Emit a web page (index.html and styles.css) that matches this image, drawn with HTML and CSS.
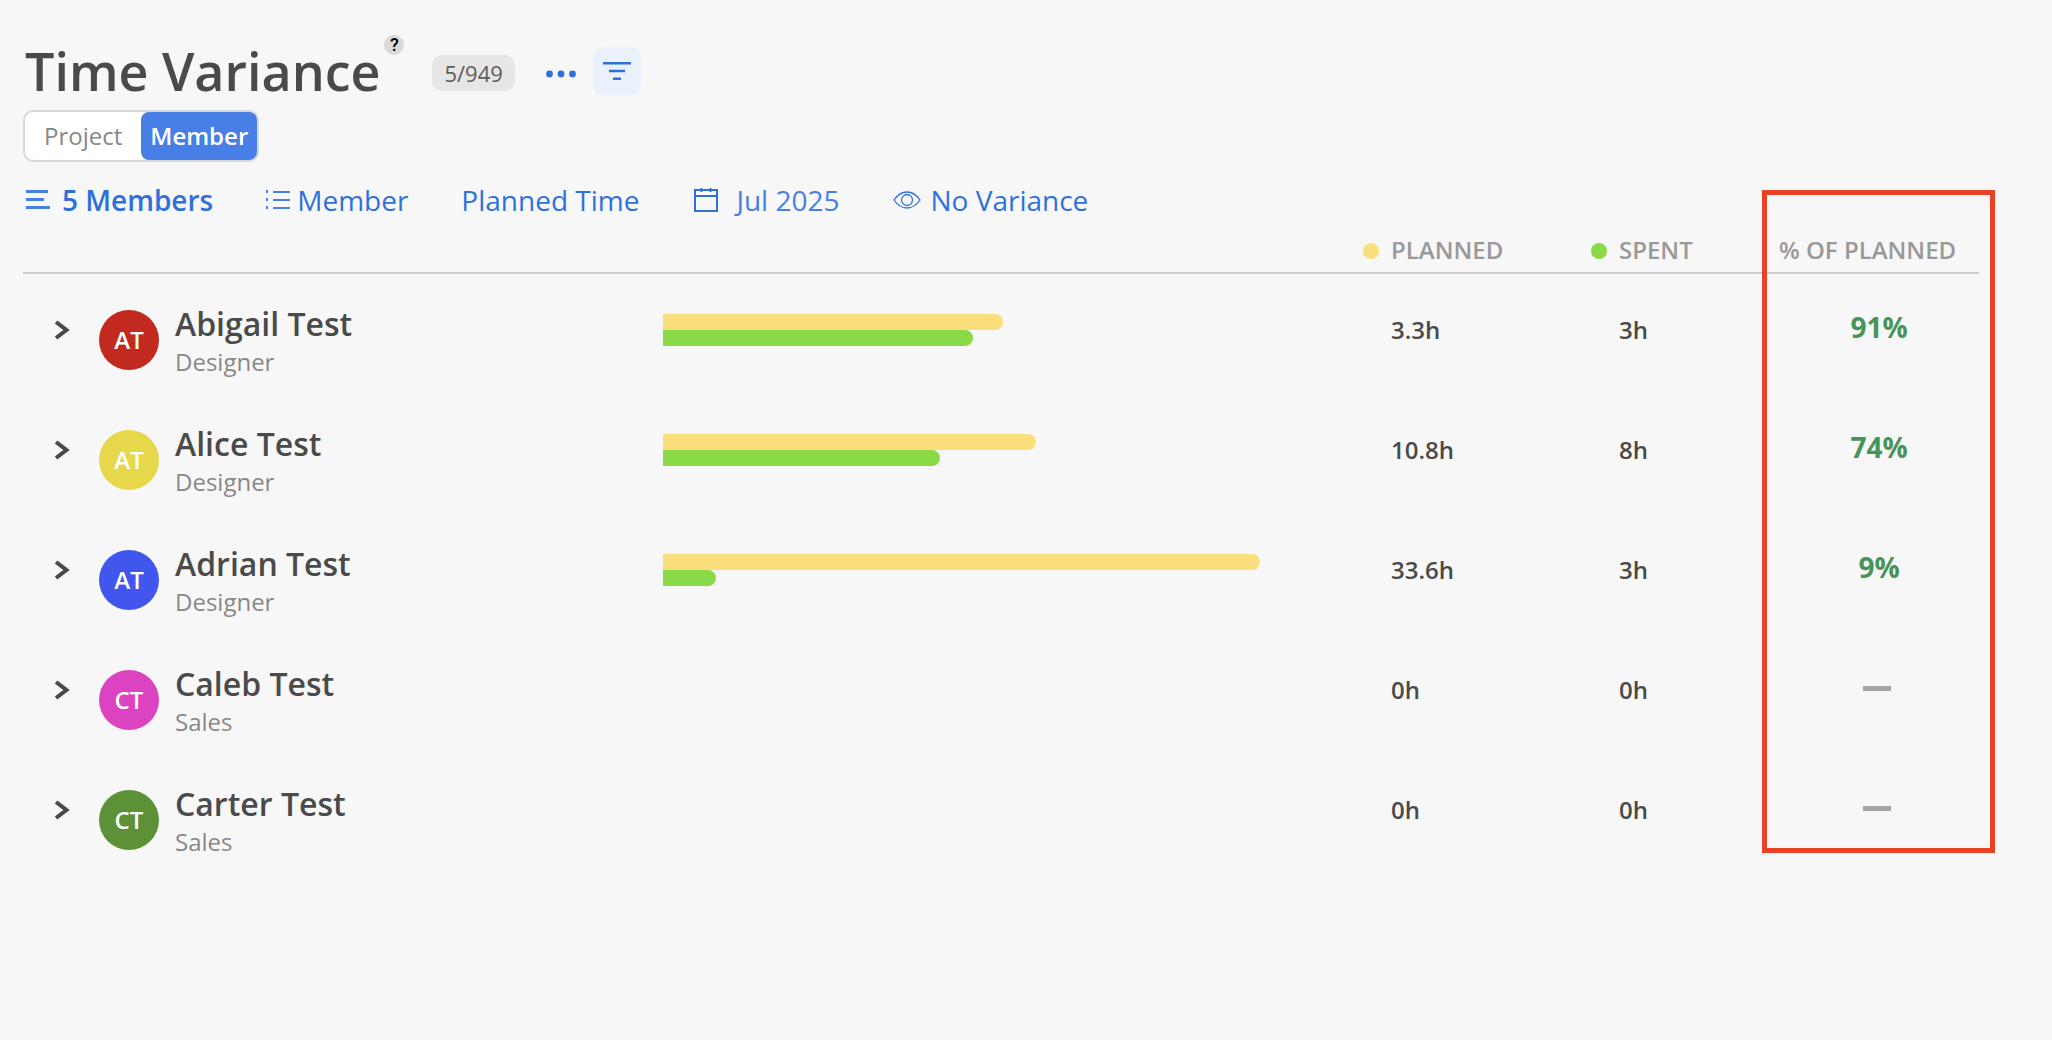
FILE: index.html
```html
<!DOCTYPE html>
<html lang="en">
<head>
<title>Time Variance</title>
<meta charset="utf-8">
<meta name="viewport" content="width=device-width, initial-scale=1.0">
<link rel="stylesheet" href="styles.css">
</head>
<body>

<header class="title-row">
	<h1>Time Variance</h1>
	<button class="help" type="button">?</button>
	<span class="count">5/949</span>
	<button class="more" type="button" aria-label="More">
		<svg width="30" height="8" viewBox="0 0 30 8" fill="#2f71d8"><circle cx="3.500" cy="4" r="3.400"/><circle cx="15" cy="4" r="3.400"/><circle cx="26.500" cy="4" r="3.400"/></svg>
	</button>
	<button class="filter-btn" type="button" aria-label="Filter">
		<svg width="28" height="18" viewBox="0 0 28 18" fill="#2f71d8"><path d="M0 0h28v2.500H0zM6 7.700h16v2.600H6zM10 15.500h8V18h-8z"/></svg>
	</button>
</header>

<div class="toggle">
	<button type="button">Project</button>
	<button type="button" class="active">Member</button>
</div>

<nav class="filters">
	<button type="button" class="bold sort">
		<svg width="24" height="20" viewBox="0 0 24 20" fill="#477fe6"><path d="M0 0h22v3H0zM0 8h18v3H0zM0 16h24v3H0z"/></svg>
		5 Members
	</button>
	<button type="button" class="group">
		<svg width="24" height="20" viewBox="0 0 24 20" fill="#477fe6"><path d="M0 0h2v3H0zM7 1h17v2H7zM0 8h2v3H0zM7 9h17v2H7zM0 16h2v3H0zM7 17h17v2H7z"/></svg>
		Member
	</button>
	<button type="button">Planned Time</button>
	<button type="button" class="date">
		<svg width="26" height="26" viewBox="0 0 26 26" fill="none" stroke="#2f71d8" stroke-width="2"><path d="M3 3h22v21H3zM3 9h22M9.500 1v4M18.500 1v4"/></svg>
		Jul 2025
	</button>
	<button type="button" class="eye">
		<svg width="28" height="20" viewBox="0 0 28 20" fill="none" stroke="#2f71d8" stroke-width="1.300"><path d="M1 10Q6.500 2 14 2T27 10Q21.500 18 14 18T1 10z"/><circle cx="14" cy="10" r="5.500"/></svg>
		No Variance
	</button>
</nav>

<div class="table-wrap">
<table>
	<colgroup>
		<col class="col-member">
		<col class="col-bars">
		<col class="col-planned">
		<col class="col-spent">
		<col class="col-percent">
	</colgroup>
	<thead>
		<tr>
			<td></td>
			<td></td>
			<th scope="col"><span class="dot yellow"></span>PLANNED</th>
			<th scope="col"><span class="dot green"></span>SPENT</th>
			<th scope="col">% OF PLANNED</th>
		</tr>
	</thead>
	<tbody>
		<tr>
			<td>
				<div class="member">
					<button class="expand" type="button" aria-label="Expand"><svg width="16" height="20" viewBox="0 0 16 20" fill="none" stroke="#4a4a4a" stroke-width="4"><path d="M1 2l10.500 8L1 18"/></svg></button>
					<span class="avatar red">AT</span>
					<div><div class="name">Abigail Test</div><div class="role">Designer</div></div>
				</div>
			</td>
			<td class="bars"><div class="bar yellow" style="width:57%"></div><div class="bar green" style="width:52%"></div></td>
			<td class="hours">3.3h</td>
			<td class="hours">3h</td>
			<td class="percent">91%</td>
		</tr>
		<tr>
			<td>
				<div class="member">
					<button class="expand" type="button" aria-label="Expand"><svg width="16" height="20" viewBox="0 0 16 20" fill="none" stroke="#4a4a4a" stroke-width="4"><path d="M1 2l10.500 8L1 18"/></svg></button>
					<span class="avatar gold">AT</span>
					<div><div class="name">Alice Test</div><div class="role">Designer</div></div>
				</div>
			</td>
			<td class="bars"><div class="bar yellow" style="width:62.5%"></div><div class="bar green" style="width:46.4%"></div></td>
			<td class="hours">10.8h</td>
			<td class="hours">8h</td>
			<td class="percent">74%</td>
		</tr>
		<tr>
			<td>
				<div class="member">
					<button class="expand" type="button" aria-label="Expand"><svg width="16" height="20" viewBox="0 0 16 20" fill="none" stroke="#4a4a4a" stroke-width="4"><path d="M1 2l10.500 8L1 18"/></svg></button>
					<span class="avatar blue">AT</span>
					<div><div class="name">Adrian Test</div><div class="role">Designer</div></div>
				</div>
			</td>
			<td class="bars"><div class="bar yellow" style="width:100%"></div><div class="bar green" style="width:8.9%"></div></td>
			<td class="hours">33.6h</td>
			<td class="hours">3h</td>
			<td class="percent">9%</td>
		</tr>
		<tr>
			<td>
				<div class="member">
					<button class="expand" type="button" aria-label="Expand"><svg width="16" height="20" viewBox="0 0 16 20" fill="none" stroke="#4a4a4a" stroke-width="4"><path d="M1 2l10.500 8L1 18"/></svg></button>
					<span class="avatar pink">CT</span>
					<div><div class="name">Caleb Test</div><div class="role">Sales</div></div>
				</div>
			</td>
			<td class="bars"></td>
			<td class="hours">0h</td>
			<td class="hours">0h</td>
			<td class="percent"><span class="none"></span></td>
		</tr>
		<tr>
			<td>
				<div class="member">
					<button class="expand" type="button" aria-label="Expand"><svg width="16" height="20" viewBox="0 0 16 20" fill="none" stroke="#4a4a4a" stroke-width="4"><path d="M1 2l10.500 8L1 18"/></svg></button>
					<span class="avatar olive">CT</span>
					<div><div class="name">Carter Test</div><div class="role">Sales</div></div>
				</div>
			</td>
			<td class="bars"></td>
			<td class="hours">0h</td>
			<td class="hours">0h</td>
			<td class="percent"><span class="none"></span></td>
		</tr>
	</tbody>
</table>
<div class="highlight"></div>
</div>

</body>
</html>
```
FILE: styles.css
```css
* {
	box-sizing: border-box;
}

body {
	margin: 0;
	padding: 35px 73px 40px 23px;
	background-color: #f7f7f7;
	color: #4a4a4a;
	font-family: "Open Sans", sans-serif;
	font-size: 24px;
	line-height: 32px;
}

button {
	margin: 0;
	padding: 0;
	border: 0;
	background: none;
	font: inherit;
	color: inherit;
	cursor: pointer;
}

svg {
	display: block;
	flex: none;
}

/* title */
.title-row {
	display: flex;
	align-items: center;
	height: 72px;
	padding-left: 2px;
}

h1 {
	margin: 0;
	font-size: 52px;
	line-height: 72px;
	font-weight: 600;
}

.help {
	align-self: flex-start;
	width: 20px;
	height: 20px;
	margin-left: 4px;
	border-radius: 50%;
	background-color: #dadada;
	color: #000;
	font-family: Roboto, sans-serif;
	font-size: 18px;
	line-height: 20px;
	font-weight: 500;
}

.count {
	margin: 4px 0 0 28px;
	padding: 2px 12px;
	border-radius: 10px;
	background-color: #e6e6e6;
	color: #5c5c5c;
	font-size: 22px;
}

.more {
	margin: 6px 0 0 31px;
}

.filter-btn {
	display: flex;
	align-items: center;
	justify-content: center;
	width: 48px;
	height: 48px;
	margin-left: 17px;
	border-radius: 10px;
	background-color: #e9f1fc;
}

/* project / member switch */
.toggle {
	display: flex;
	width: max-content;
	margin-top: 3px;
	height: 52px;
	border: 2px solid #d8d8d8;
	border-radius: 10px;
	background-color: #fff;
}

.toggle button {
	padding: 0 19px;
	color: #888;
}

.toggle .active {
	padding: 0 9px;
	border-radius: 8px;
	background-color: #477fe6;
	color: #fff;
	font-weight: 600;
}

/* filters */
.filters {
	display: flex;
	gap: 53px;
	margin-top: 19px;
	padding-left: 3px;
	color: #2f71d8;
	font-size: 28px;
	line-height: 38px;
}

.filters button {
	display: flex;
	align-items: center;
	gap: 12px;
}

.filters .bold {
	font-weight: 600;
}

.filters .group {
	gap: 7px;
}

.filters .date {
	gap: 18px;
	color: #477fe6;
}

.filters .eye {
	gap: 10px;
}

/* table */
.table-wrap {
	position: relative;
}

table {
	width: 100%;
	table-layout: fixed;
	border-collapse: separate;
	border-spacing: 0;
}

.col-member {
	width: 640px;
}

.col-planned {
	width: 228px;
}

.col-spent {
	width: 188px;
}

.col-percent {
	width: 200px;
}

th, td {
	padding: 0;
	text-align: left;
	vertical-align: top;
}

thead th, thead td {
	padding: 15px 0 6px;
	border-bottom: 2px solid #ccc;
	color: #999;
	font-weight: 600;
}

.dot {
	display: inline-block;
	width: 16px;
	height: 16px;
	margin-right: 12px;
	border-radius: 50%;
}

.yellow {
	background-color: #fade7b;
}

.green {
	background-color: #8ada48;
}

tbody td {
	height: 120px;
}

.member {
	display: flex;
	align-items: flex-start;
	padding: 28px 0 0 32px;
}

.expand {
	margin: 18px 28px 0 0;
}

.avatar {
	width: 60px;
	height: 60px;
	margin: 8px 16px 0 0;
	border-radius: 50%;
	color: #fff;
	line-height: 60px;
	font-weight: 600;
	text-align: center;
}

.red {
	background-color: #c22a1f;
}

.gold {
	background-color: #e7d74b;
}

.blue {
	background-color: #4156ec;
}

.pink {
	background-color: #db43c0;
}

.olive {
	background-color: #5c9138;
}

.name {
	font-size: 32px;
	line-height: 44px;
	font-weight: 600;
}

.role {
	color: #888;
}

.bars {
	padding: 40px 103px 0 0;
}

.bar {
	height: 16px;
	border-radius: 0 8px 8px 0;
}

.hours {
	padding: 40px 0 0 28px;
	font-weight: 600;
}

.percent {
	padding-top: 34px;
	color: #47945a;
	font-size: 28px;
	line-height: 38px;
	font-weight: 700;
	text-align: center;
}

.none {
	display: block;
	width: 28px;
	height: 5px;
	margin: 18px 0 0 84px;
	background-color: #a5a5a5;
}

.highlight {
	position: absolute;
	top: -29px;
	right: -16px;
	bottom: 21px;
	width: 233px;
	border: 5px solid #e94126;
	pointer-events: none;
}
```
